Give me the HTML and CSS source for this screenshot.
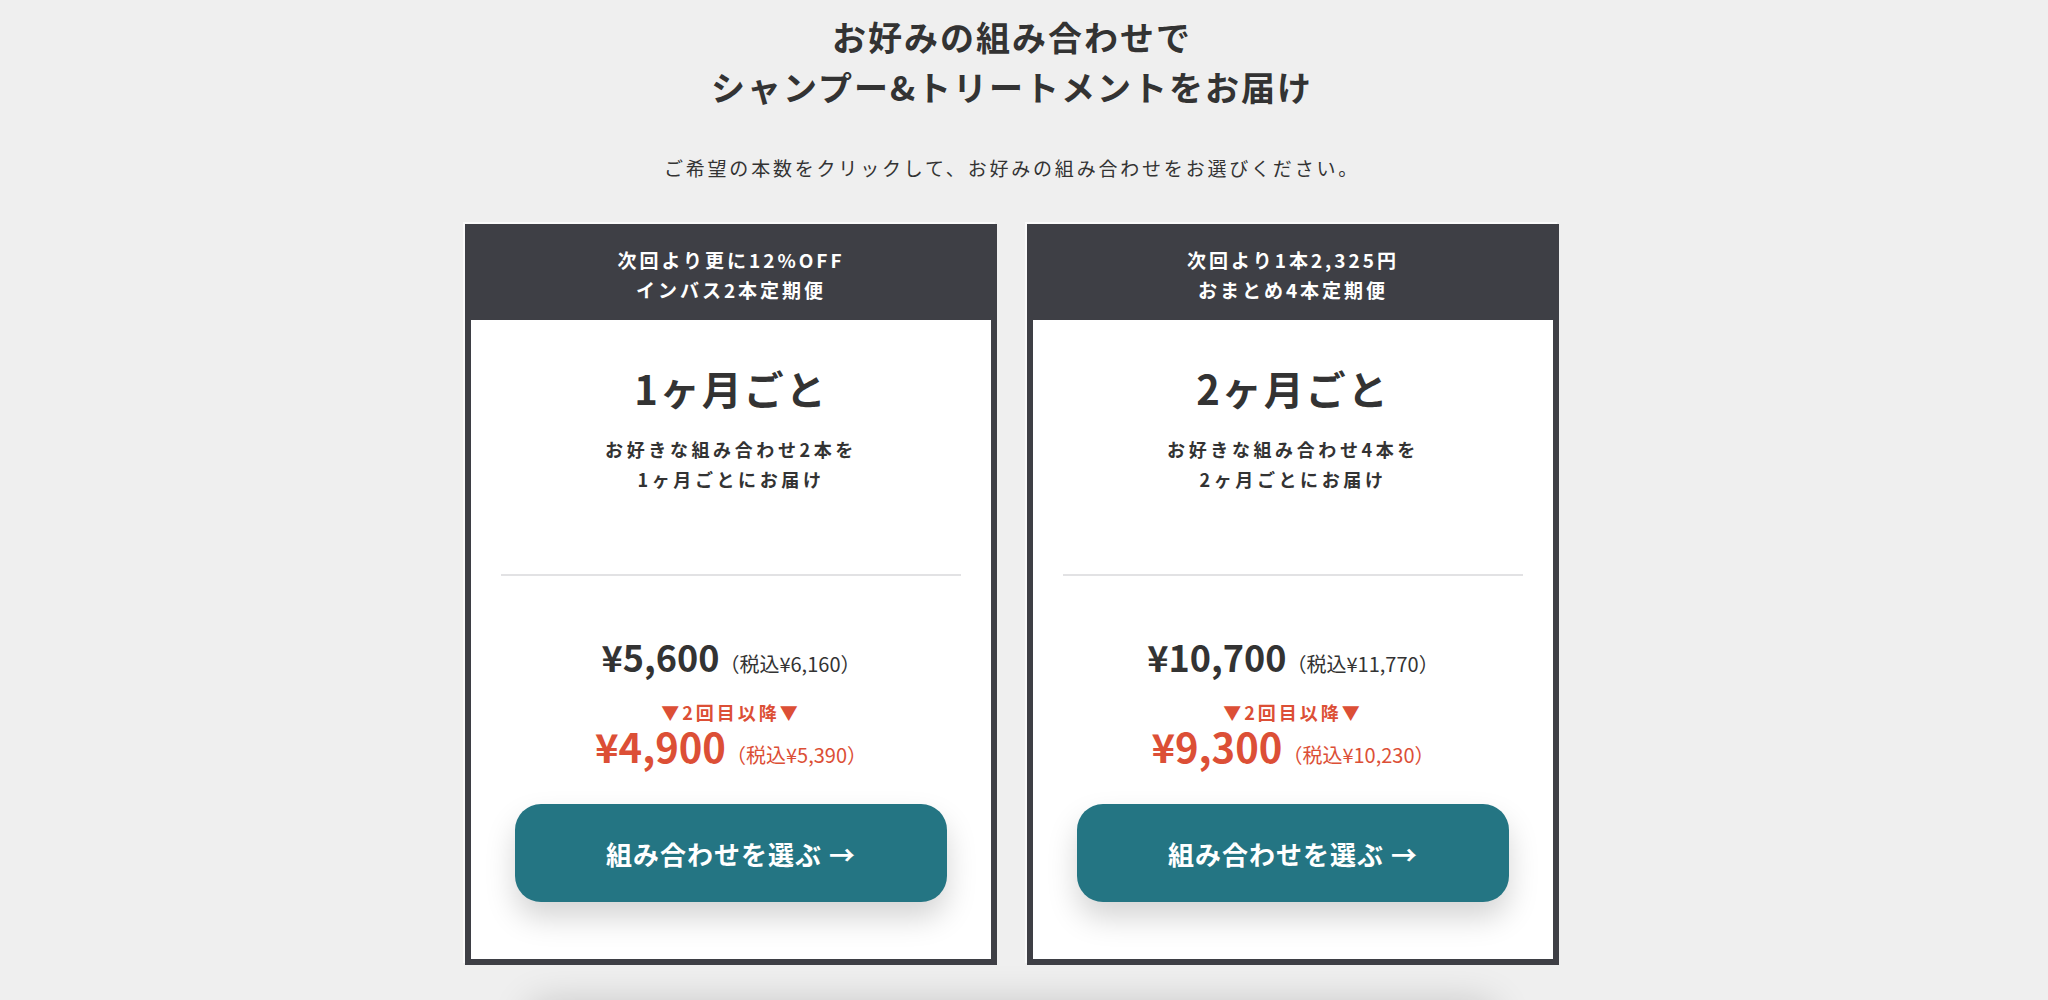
FILE: index.html
```html
<!DOCTYPE html>
<html lang="ja">
<head>
<meta charset="utf-8">
<title>定期便</title>
<link rel="stylesheet" href="styles.css">
</head>
<body>
<div class="page">
  <h1 class="title">お好みの組み合わせで<br>シャンプー&amp;トリートメントをお届け</h1>
  <p class="lead">ご希望の本数をクリックして、お好みの組み合わせをお選びください。</p>
  <div class="cards">
    <section class="card">
      <div class="card-head">次回より更に12%OFF<br>インバス2本定期便</div>
      <div class="card-body">
        <h2 class="cycle">1ヶ月ごと</h2>
        <p class="desc">お好きな組み合わせ2本を<br>1ヶ月ごとにお届け</p>
        <hr class="sep">
        <div class="price"><span class="amount">¥5,600</span><span class="tax">（税込¥6,160）</span></div>
        <div class="after">▼2回目以降▼</div>
        <div class="price red"><span class="amount">¥4,900</span><span class="tax">（税込¥5,390）</span></div>
        <a class="btn" href="#">組み合わせを選ぶ →</a>
      </div>
    </section>
    <section class="card">
      <div class="card-head">次回より1本2,325円<br>おまとめ4本定期便</div>
      <div class="card-body">
        <h2 class="cycle">2ヶ月ごと</h2>
        <p class="desc">お好きな組み合わせ4本を<br>2ヶ月ごとにお届け</p>
        <hr class="sep">
        <div class="price"><span class="amount">¥10,700</span><span class="tax">（税込¥11,770）</span></div>
        <div class="after">▼2回目以降▼</div>
        <div class="price red"><span class="amount">¥9,300</span><span class="tax">（税込¥10,230）</span></div>
        <a class="btn" href="#">組み合わせを選ぶ →</a>
      </div>
    </section>
  </div>
  <div class="next-block"></div>
</div>
</body>
</html>
```

FILE: styles.css
```css
html, body {
  margin: 0;
  padding: 0;
  background: #efefef;
}
body {
  font-family: "Noto Sans CJK JP", "Noto Sans", sans-serif;
  color: #333;
  overflow: hidden;
}
.page {
  display: flex;
  flex-direction: column;
  align-items: center;
  padding-right: 24px;
}
.title {
  margin: 12px 0 0;
  font-size: 34px;
  line-height: 50px;
  font-weight: 700;
  letter-spacing: 2px;
  text-align: center;
  color: #333;
}
.lead {
  margin: 41px 0 0;
  font-size: 19px;
  line-height: 30px;
  letter-spacing: 2.8px;
  text-align: center;
}
.cards {
  display: flex;
  gap: 30px;
  margin-top: 41px;
}
.card {
  width: 532px;
  box-sizing: border-box;
  border: 6px solid #3e3f45;
  background: #fff;
  box-shadow: -2px -2px 0 #fafafa;
  display: flex;
  flex-direction: column;
}
.card-head {
  background: #3e3f45;
  color: #fff;
  font-size: 19px;
  line-height: 30px;
  font-weight: 700;
  letter-spacing: 3px;
  text-align: center;
  padding: 15px 0;
}
.card-body {
  padding: 0 30px 57px;
  display: flex;
  flex-direction: column;
  align-items: center;
}
.cycle {
  margin: 38px 0 0;
  font-size: 40px;
  line-height: 60px;
  font-weight: 700;
  letter-spacing: 2px;
}
.desc {
  margin: 16px 0 0;
  font-size: 18px;
  line-height: 30px;
  font-weight: 700;
  letter-spacing: 3.6px;
  text-align: center;
}
.sep {
  align-self: stretch;
  margin: 80px 0 0;
  border: 0;
  height: 2px;
  background: #e2e2e4;
}
.price {
  margin-top: 55px;
  height: 50px;
  line-height: 50px;
  font-size: 36px;
  text-align: center;
  white-space: nowrap;
}
.amount {
  font-size: 36px;
  font-weight: 700;
  color: #333;
}
.tax {
  font-size: 20px;
  line-height: 20px;
  color: #333;
}
.after {
  margin-top: 18px;
  height: 26px;
  font-size: 18px;
  line-height: 26px;
  font-weight: 700;
  letter-spacing: 3px;
  color: #dc4f36;
}
.price.red {
  margin-top: 0;
  height: 42px;
  line-height: 42px;
  font-size: 40px;
}
.red .amount {
  font-size: 40px;
  color: #dc4f36;
}
.red .tax {
  color: #dc4f36;
}
.btn {
  margin-top: 37px;
  width: 432px;
  height: 98px;
  border-radius: 26px;
  background: #247583;
  color: #fff;
  text-decoration: none;
  font-size: 26px;
  font-weight: 700;
  letter-spacing: 1px;
  display: flex;
  align-items: center;
  justify-content: center;
  box-shadow: 0 16px 30px rgba(0, 0, 0, 0.17);
}
.next-block {
  margin-top: 40px;
  width: 960px;
  height: 120px;
  background: #efefef;
  box-shadow: 0 0 40px rgba(0, 0, 0, 0.2);
}
```
